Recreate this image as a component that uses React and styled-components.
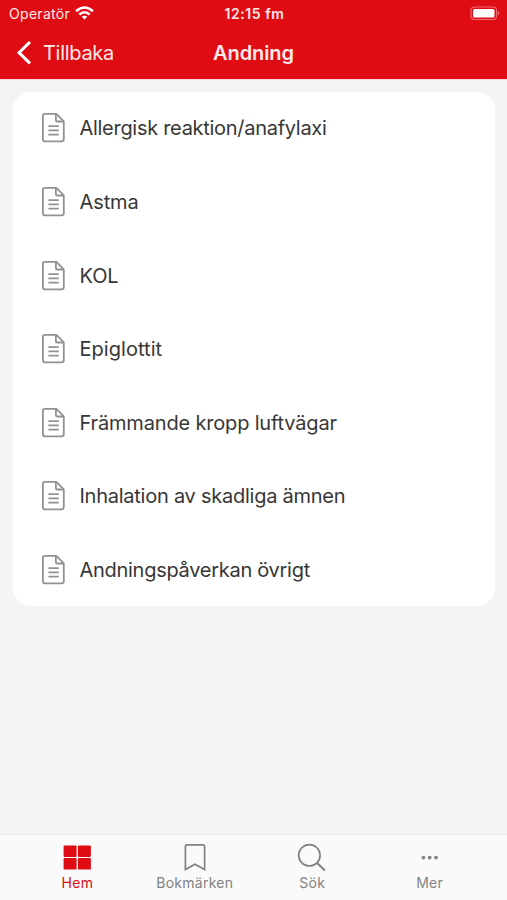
import React from "react";
import styled, { createGlobalStyle } from "styled-components";

const GlobalStyle = createGlobalStyle`
  * { box-sizing: border-box; }
  body { margin: 0; background: #f4f4f4; font-family: Inter, "Liberation Sans", sans-serif; }
`;

const Screen = styled.div`
  display: flex;
  flex-direction: column;
  height: 900px;
  background: #f4f4f4;
`;

const Header = styled.header`
  height: 79px;
  background: #df0c14;
  color: #ffe9e9;
  box-shadow: 0 1px 0 #fbdcdd;
`;

const StatusBar = styled.div`
  display: grid;
  grid-template-columns: 1fr auto 1fr;
  align-items: center;
  height: 27px;
  padding: 0 7px 0 9px;
  font-size: 14px;
  line-height: 16px;
`;

const Carrier = styled.div`
  display: flex;
  align-items: center;
  gap: 5px;
  letter-spacing: 0.3px;
`;

const Clock = styled.div`
  font-weight: 600;
  letter-spacing: 0.55px;
`;

const BatteryIcon = styled.svg`
  justify-self: end;
`;

const NavBar = styled.div`
  display: grid;
  grid-template-columns: 1fr auto 1fr;
  align-items: center;
  height: 51px;
  padding: 0 16px;
`;

const BackButton = styled.button`
  display: flex;
  align-items: center;
  gap: 11px;
  padding: 0;
  border: 0;
  background: none;
  color: inherit;
  font: 400 20px/24px Inter, "Liberation Sans", sans-serif;
  letter-spacing: -0.3px;
`;

const Title = styled.h1`
  margin: 0;
  font-size: 20px;
  line-height: 24px;
  font-weight: 600;
  letter-spacing: -0.1px;
`;

const Main = styled.main`
  flex: 1;
  padding: 13px 12px 0 13px;
`;

const Card = styled.ul`
  display: grid;
  grid-template-rows: repeat(7, 73.65px);
  height: 514px;
  margin: 0;
  padding: 0;
  list-style: none;
  background: #fff;
  border-radius: 18px;
  overflow: hidden;
`;

const Row = styled.li`
  display: flex;
  align-items: center;
  gap: 13.5px;
  height: 72.5px;
  padding-left: 28px;
  color: #373737;
  font-size: 20px;
  line-height: 24px;
  letter-spacing: ${(p) => p.$tracking}px;
`;

const TabBar = styled.nav`
  display: grid;
  grid-template-columns: repeat(4, 117.4px);
  justify-content: center;
  height: 67px;
  background: #fafafa;
  border-top: 2px solid #ededed;
`;

const Tab = styled.div`
  display: flex;
  flex-direction: column;
  align-items: center;
  padding-top: 7px;
  color: ${(p) => (p.$active ? "#df0c14" : "#828282")};
  font-size: 14px;
  line-height: 18px;
  letter-spacing: ${(p) => p.$tracking}px;
`;

const FileSvg = styled.svg`
  margin-bottom: 1px;
`;

const FileIcon = () => (
  <FileSvg width="25" height="31" viewBox="0 0 25 31" fill="none" stroke="#929292" strokeWidth="1.8" strokeLinejoin="round">
    <path d="M3.8 1.9H15.4L22.8 9.3V27.1Q22.8 29.4 20.5 29.4H4.1Q1.9 29.4 1.9 27.1V3.8Q1.9 1.9 3.8 1.9Z" />
    <path d="M14.9 1.9V7.9Q14.9 9.5 16.5 9.5H22.8M7.4 14.2H17.8M7.4 18.4H17.8M7.4 22.6H17.8" />
  </FileSvg>
);

const WifiIcon = () => (
  <svg width="19" height="15" viewBox="0 0 19 15" fill="none" stroke="#fff" strokeWidth="2.5">
    <path d="M1.1 5.3Q9.5 -2.3 17.9 5.3M4.3 8.5Q9.5 4 14.7 8.5" />
    <path d="M9.5 13.5L6.7 10.8Q9.5 8.5 12.3 10.8Z" fill="#fff" stroke="none" />
  </svg>
);

const TabIcon = ({ name }) => (
  <svg width="32" height="32" viewBox="0 0 32 32" fill="none" stroke="currentColor" strokeWidth="1.7">
    {name === "home" && (
      <g fill="currentColor" stroke="none">
        <rect x="2.6" y="3.4" width="13" height="11.5" rx="1.2" />
        <rect x="16.9" y="3.4" width="13" height="11.5" rx="1.2" />
        <rect x="2.6" y="16.1" width="13" height="11.5" rx="1.2" />
        <rect x="16.9" y="16.1" width="13" height="11.5" rx="1.2" />
      </g>
    )}
    {name === "bookmark" && <path d="M8 2.8H24Q25.6 2.8 25.6 4.4V27.6L16 22.2L6.4 27.6V4.4Q6.4 2.8 8 2.8Z" />}
    {name === "search" && (
      <>
        <circle cx="13.4" cy="13.3" r="10.7" />
        <path d="M20.9 20.8L28.9 28.5" strokeWidth="2.1" />
      </>
    )}
    {name === "more" && (
      <g fill="currentColor" stroke="none">
        <circle cx="9.4" cy="15.6" r="1.9" />
        <circle cx="15.7" cy="15.6" r="1.9" />
        <circle cx="22" cy="15.6" r="1.9" />
      </g>
    )}
  </svg>
);

const topics = [
  ["Allergisk reaktion/anafylaxi", -0.29],
  ["Astma", -0.1],
  ["KOL", -0.1],
  ["Epiglottit", 0.05],
  ["Främmande kropp luftvägar", -0.17],
  ["Inhalation av skadliga ämnen", -0.25],
  ["Andningspåverkan övrigt", -0.28],
];

const tabs = [
  ["Hem", "home", 0.3],
  ["Bokmärken", "bookmark", 0.27],
  ["Sök", "search", 0.2],
  ["Mer", "more", 0.2],
];

export default function App() {
  return (
    <Screen>
      <GlobalStyle />
      <Header>
        <StatusBar>
          <Carrier><span>Operatör</span><WifiIcon /></Carrier>
          <Clock>12:15 fm</Clock>
          <BatteryIcon width="30" height="15" viewBox="0 0 30 15">
            <rect x="1" y="1" width="25.5" height="12.5" rx="3.5" fill="none" stroke="#f06a70" strokeWidth="1.2" />
            <rect x="3" y="3" width="21.5" height="8.5" rx="1.6" fill="#fff" />
            <path d="M28 5Q30 7.2 28 9.4Z" fill="#f48b8f" />
          </BatteryIcon>
        </StatusBar>
        <NavBar>
          <BackButton>
            <svg width="16" height="24" viewBox="0 0 16 24" fill="none" stroke="#fff" strokeWidth="3">
              <path d="M14 1L3 11.7L14 22.4" />
            </svg>
            <span>Tillbaka</span>
          </BackButton>
          <Title>Andning</Title>
        </NavBar>
      </Header>
      <Main>
        <Card>
          {topics.map(([label, tracking]) => (
            <Row key={label} $tracking={tracking}><FileIcon /><span>{label}</span></Row>
          ))}
        </Card>
      </Main>
      <TabBar>
        {tabs.map(([label, icon, tracking], i) => (
          <Tab key={label} $active={i === 0} $tracking={tracking}><TabIcon name={icon} /><span>{label}</span></Tab>
        ))}
      </TabBar>
    </Screen>
  );
}
